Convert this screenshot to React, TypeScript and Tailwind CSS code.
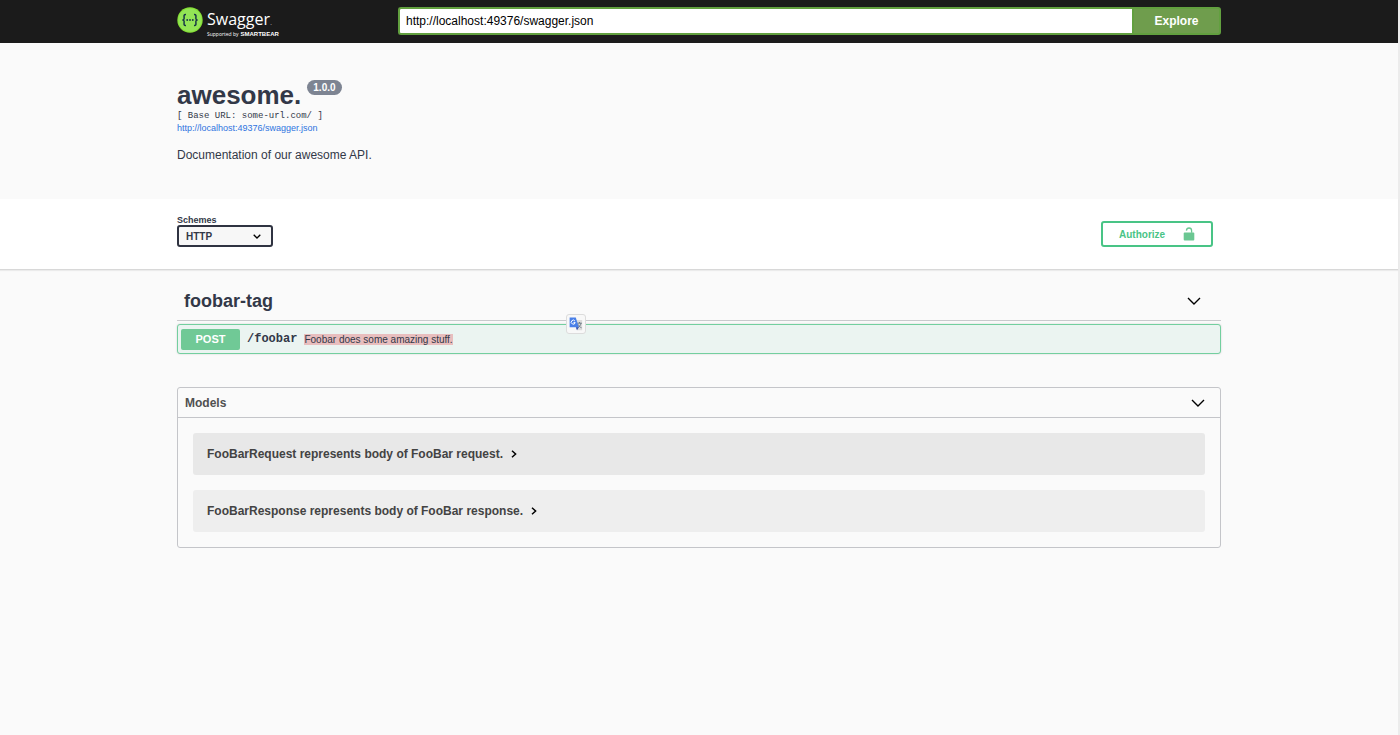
import React from "react";

const models = [
  { title: "FooBarRequest represents body of FooBar request.", bg: "bg-[#e8e8e8]" },
  { title: "FooBarResponse represents body of FooBar response.", bg: "bg-[#eeeeee]" },
];

const Chevron = ({ className }: { className: string }) => (
  <svg viewBox="0 0 14 8" className={className} fill="none" stroke="currentColor" strokeWidth="1.4" aria-hidden="true">
    <path d="M1 1l6 6 6-6" />
  </svg>
);

const SwaggerLogo = () => (
  <a href="#" className="flex items-start gap-1 text-white">
    <svg viewBox="0 0 26 26" className="h-[26px] w-[26px]" aria-hidden="true">
      <circle cx="13" cy="13" r="12.7" fill="#85e035" />
      <circle cx="13" cy="13" r="11.6" fill="#93e556" />
      <g fill="none" stroke="#173647" strokeWidth="1.5">
        <path d="M9 7.5C7 7.4 6.9 8.4 7.1 10.2 7.3 12 7 12.9 5.4 13 7 13.1 7.3 14 7.1 15.8 6.9 17.6 7 18.6 9 18.5" />
        <path d="M17 7.5c2-.1 2.1.9 1.9 2.7-.2 1.8.1 2.7 1.7 2.8-1.6.1-1.9 1-1.7 2.8.2 1.8.1 2.8-1.9 2.7" />
      </g>
      <g fill="#173647">
        <circle cx="10.2" cy="13" r="0.9" />
        <circle cx="13" cy="13" r="0.9" />
        <circle cx="15.8" cy="13" r="0.9" />
      </g>
    </svg>
    <span className="flex flex-col pt-[3px] font-['Open_Sans',sans-serif]">
      <span className="text-[16px] leading-[18px]">
        Swagger<span className="text-[8px] text-[#9a9a9a]">.</span>
      </span>
      <span className="flex items-center gap-[2px] text-[5px] leading-[6px]">
        Supported by <b className="font-['Liberation_Sans',sans-serif] text-[6px]">SMARTBEAR</b>
      </span>
    </span>
  </a>
);

const TopBar = () => (
  <header className="bg-[#1b1b1b]">
    <div className="mx-auto flex h-[43px] max-w-[1044px] items-start pt-[7px]">
      <div className="w-[221px] shrink-0">
        <SwaggerLogo />
      </div>
      <form className="flex h-7 flex-1" onSubmit={(e) => e.preventDefault()}>
        <input
          type="text"
          aria-label="Definition URL"
          defaultValue="http://localhost:49376/swagger.json"
          className="min-w-0 flex-1 rounded-l-[3px] border-2 border-r-0 border-[#62a03f] bg-white px-1.5 text-[12px] text-black outline-none"
        />
        <button className="w-[89px] rounded-r-[3px] border-2 border-[#62a03f] bg-[#6f9d4d] text-[12px] font-bold text-white">
          Explore
        </button>
      </form>
    </div>
  </header>
);

const Info = () => (
  <section className="mx-auto max-w-[1044px] pt-[37px] pb-[35px] text-[#323848]">
    <div className="flex items-start gap-[6px]">
      <h1 className="text-[26px] leading-[30px] font-bold">awesome.</h1>
      <span className="rounded-full bg-[#7d8492] px-[6px] text-[10px] leading-[15px] font-bold text-white">1.0.0</span>
    </div>
    <pre className="font-['Liberation_Mono',monospace] text-[9px] leading-[12px]">[ Base URL: some-url.com/ ]</pre>
    <a href="#" className="block text-[9px] leading-[12px] text-[#2f74e0]">
      http://localhost:49376/swagger.json
    </a>
    <p className="pt-3 text-[12px] leading-[18px]">Documentation of our awesome API.</p>
  </section>
);

const Schemes = () => (
  <section className="border-b border-[#d8d8d8] bg-white shadow-[0_1px_1px_rgba(0,0,0,0.06)]">
    <div className="mx-auto flex h-[70px] max-w-[1044px] items-start justify-between pt-4 pr-2">
      <div className="flex flex-col text-[#323848]">
        <label htmlFor="schemes" className="text-[9px] leading-[10px] font-bold">
          Schemes
        </label>
        <div className="relative flex">
          <select
            id="schemes"
            className="h-[22px] w-24 appearance-none rounded-[3px] border-2 border-[#2f3341] bg-[#f7f7f7] pl-[7px] text-[10px] font-bold outline-none"
          >
            <option>HTTP</option>
          </select>
          <svg
            viewBox="0 0 8 5"
            className="pointer-events-none absolute top-[9px] right-3 h-[5px] w-2 text-black"
            fill="none"
            stroke="currentColor"
            strokeWidth="1.3"
            aria-hidden="true"
          >
            <path d="M.7.7L4 4 7.3.7" />
          </svg>
        </div>
      </div>
      <button className="mt-[6px] flex h-[26px] w-28 items-center justify-between rounded-[3px] border-2 border-[#49c486] px-4 text-[10px] font-bold text-[#49c486]">
        Authorize
        <svg viewBox="0 0 12 14" className="h-[14px] w-3" aria-hidden="true">
          <rect x="0.7" y="5.4" width="10.6" height="8.2" rx="1" fill="#6bc792" />
          <path d="M3.4 3.6C3.6 1.8 4.6 1 6 1s2.6.9 2.6 2.7v2" fill="none" stroke="#6bc792" strokeWidth="1.3" />
        </svg>
      </button>
    </div>
  </section>
);

// floating badge that the translate extension puts near selected text
const TranslateBadge = () => (
  <button
    aria-label="Translate"
    className="absolute -top-[11px] left-[388px] flex h-5 w-5 items-center justify-center rounded-[3px] border border-[#dcdcdc] bg-[#f8f8f8]"
  >
    <svg viewBox="0 0 14 14" className="h-[14px] w-[14px] shrink-0" aria-hidden="true">
      <path d="M5 3h8.2v10.2H8z" fill="#dcdcdc" />
      <path d="M8.2 6.2h4.6M10.5 5v1.2M12 6.2c-.4 2-1.6 3.6-3.4 4.6M9.2 7.4c.6 1.6 1.8 2.8 3.4 3.4" fill="none" stroke="#66757f" strokeWidth="0.9" />
      <path d="M.6.4h6.2l3 9.8H.6z" fill="#4a80e8" />
      <path d="M6.8 10.2h3L8 13.2z" fill="#2f4fb0" />
      <path d="M5.9 4A2 2 0 1 0 6.2 5.6H4.5" fill="none" stroke="#fff" strokeWidth="1" />
    </svg>
  </button>
);

const Operations = () => (
  <section className="text-[#323848]">
    <div className="flex h-[51px] items-center justify-between border-b border-[#c9cacd] pt-3 pr-5 pl-[7px]">
      <h2 className="text-[18px] leading-6 font-bold">foobar-tag</h2>
      <button aria-label="Collapse foobar-tag">
        <Chevron className="h-2 w-[14px] text-black" />
      </button>
    </div>
    <div className="relative mt-[3px] flex h-[30px] items-center gap-[7px] rounded-[3px] border border-[#73cf9f] bg-[#ebf4f1] px-[3px] shadow-[0_0_2px_rgba(0,0,0,0.18)]">
      <button className="h-[21px] w-[59px] rounded-[2px] bg-[#70c996] text-[11px] font-bold text-white">POST</button>
      <code className="font-['Liberation_Mono',monospace] text-[12px] font-bold">/foobar</code>
      <span className="bg-[#e8bebe] text-[10px] leading-[11px]">Foobar does some amazing stuff.</span>
      <TranslateBadge />
    </div>
  </section>
);

const Models = () => (
  <section className="mt-[33px] rounded-[3px] border border-[#c4c5c9] text-[12px] font-bold">
    <div className="flex h-[30px] items-center justify-between border-b border-[#c4c5c9] pr-[15px] pl-[7px] text-[#505050]">
      <h3>Models</h3>
      <button aria-label="Collapse models">
        <Chevron className="h-2 w-[14px] text-black" />
      </button>
    </div>
    <div className="flex flex-col gap-[15px] p-[15px]">
      {models.map((model) => (
        <div key={model.title} className={`rounded-[3px] ${model.bg}`}>
          <button className="flex h-[42px] items-center gap-2 pl-[14px] text-[#434343]">
            {model.title}
            <svg viewBox="0 0 6 8" className="h-2 w-[6px] text-black" fill="none" stroke="currentColor" strokeWidth="1.5" aria-hidden="true">
              <path d="M1 .8L4.6 4 1 7.2" />
            </svg>
          </button>
        </div>
      ))}
    </div>
  </section>
);

export default function App() {
  return (
    <div className="min-h-screen border-r-2 border-[#ececec] bg-[#fafafa] font-['Liberation_Sans',Arial,sans-serif]">
      <TopBar />
      <Info />
      <Schemes />
      <main className="mx-auto max-w-[1044px]">
        <Operations />
        <Models />
      </main>
    </div>
  );
}
